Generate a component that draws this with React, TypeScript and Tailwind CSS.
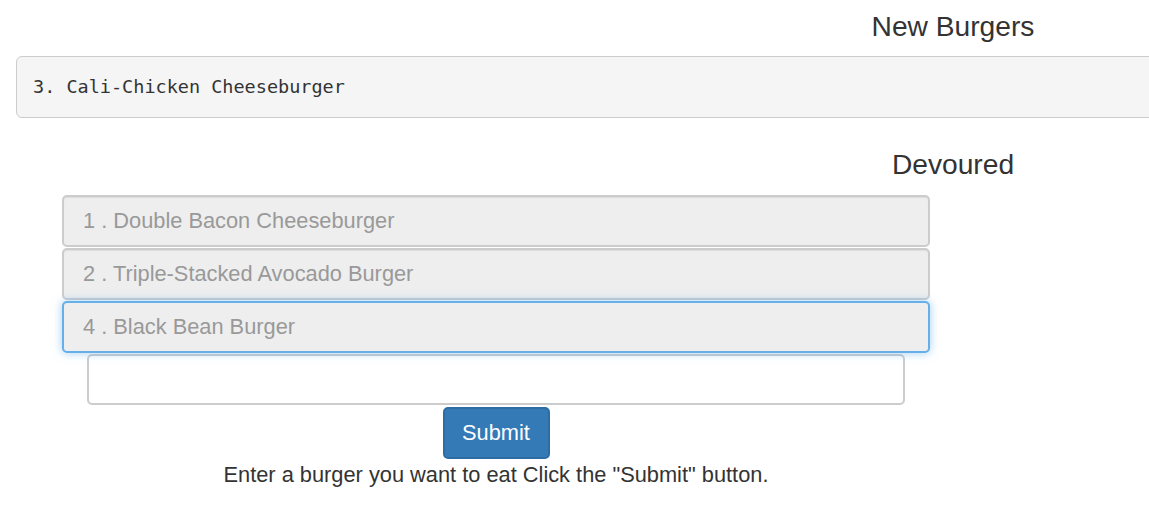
export default function App() {
  const devoured = [
    { id: 1, name: 'Double Bacon Cheeseburger', focus: false },
    { id: 2, name: 'Triple-Stacked Avocado Burger', focus: false },
    { id: 4, name: 'Black Bean Burger', focus: true }
  ];

  return (
    <div className="w-[1149px] h-[515px] overflow-hidden bg-white text-[#333] font-['Liberation_Sans',Arial,sans-serif]">
      <div className="w-[1906px]">
        {/* New burgers */}
        <h3 className="pt-[10px] text-center text-[28.2px] leading-[32px] text-[#333]">New Burgers</h3>
        <pre className="mt-[14px] ml-[16px] h-[62px] px-[16px] flex items-center bg-[#f5f5f5] border border-[#ccc] rounded-[6px] text-[18.5px] text-[#333] font-['DejaVu_Sans_Mono','Liberation_Mono',monospace]">
          3. Cali-Chicken Cheeseburger
        </pre>

        {/* Devoured */}
        <h3 className="mt-[30px] text-center text-[28.2px] leading-[32px] text-[#333]">Devoured</h3>
      </div>

      <div className="w-[992px] mt-[15px]">
        <div className="px-[62px] flex flex-col gap-[1px]">
          {devoured.map((b) => (
            <div
              key={b.id}
              className={`h-[52px] flex items-center px-[19px] bg-[#eee] rounded-[5px] border-2 text-[21.8px] text-[#999] ${
                b.focus
                  ? 'border-[#66afe9] shadow-[0_0_10px_rgba(102,175,233,0.6)]'
                  : 'border-[#ccc] shadow-[inset_0_1px_1px_rgba(0,0,0,0.075)]'
              }`}
            >
              {b.id} . {b.name}
            </div>
          ))}
        </div>

        <div className="px-[87px] mt-[1px]">
          <div className="h-[51px] bg-white border-2 border-[#ccc] rounded-[5px]" />
        </div>

        <div className="flex justify-center mt-[2px]">
          <button className="w-[107px] h-[52px] bg-[#337ab7] border-2 border-[#2e6da4] rounded-[5px] text-white text-[21.8px]">
            Submit
          </button>
        </div>

        <p className="text-center text-[21.8px] leading-[30px] mt-[1px] text-[#333]">
          Enter a burger you want to eat Click the "Submit" button.
        </p>
      </div>
    </div>
  );
}
